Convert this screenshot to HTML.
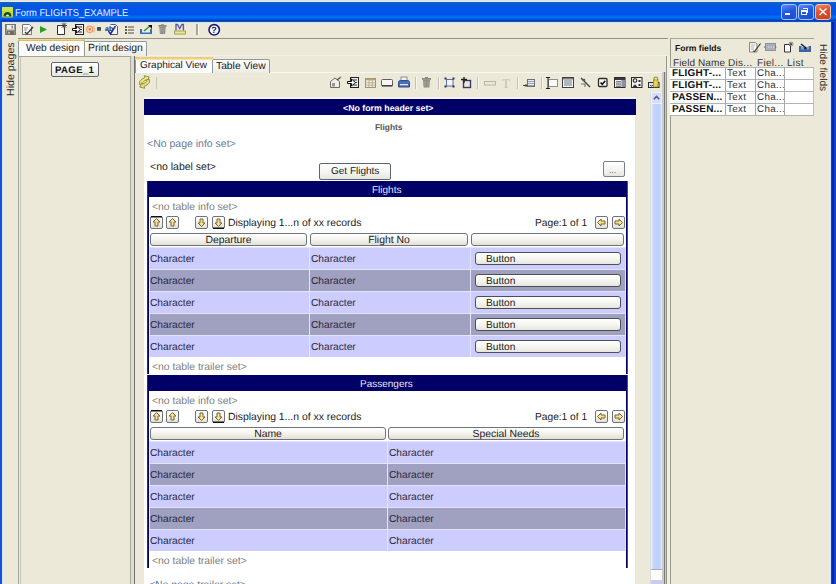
<!DOCTYPE html>
<html><head><meta charset="utf-8">
<style>
*{margin:0;padding:0;box-sizing:border-box}
html,body{width:836px;height:584px;overflow:hidden;background:#ECE9D8;font-family:"Liberation Sans",sans-serif;position:relative;text-rendering:geometricPrecision}
.a{position:absolute}
.t{position:absolute;white-space:nowrap;line-height:1}
.btn{position:absolute;border:1px solid #5C6670;border-radius:2px;background:linear-gradient(#FFFFFF,#F3F3EE 60%,#E6E5DC)}
.hb{position:absolute;border:1px solid #6C747C;border-radius:2px;background:linear-gradient(#FFFFFF,#F4F3EE 50%,#E2E0D4)}
svg{position:absolute;left:0;top:0}
</style></head><body>

<div class="a" style="left:0px;top:0px;width:836px;height:1px;background:#DCE6DA"></div>
<div class="a" style="left:0px;top:1px;width:836px;height:1px;background:#E2EEF6"></div>
<div class="a" style="left:0px;top:2px;width:836px;height:20px;background:linear-gradient(#1E5CC8 0px,#0A5AD8 2px,#0058DC 4px,#0054EA 6px,#0052EE 13px,#006EF4 14px,#006CF2 16px,#0056E2 17px,#0048D0 18px,#0038A8 19px,#3060B8 20px)"></div>
<div class="t" style="left:15px;top:9px;font-size:10px;color:#E4F0FF;transform:scaleX(0.935);transform-origin:0 0">Form FLIGHTS_EXAMPLE</div>
<div class="a" style="left:781px;top:4px;width:16px;height:16px;border:1px solid #A8C4F8;border-radius:3px;background:linear-gradient(160deg,#5A8CF4,#2458E0 45%,#1A4CD4)"></div>
<div class="a" style="left:798px;top:4px;width:16px;height:16px;border:1px solid #A8C4F8;border-radius:3px;background:linear-gradient(160deg,#5A8CF4,#2458E0 45%,#1A4CD4)"></div>
<div class="a" style="left:815px;top:4px;width:16px;height:16px;border:1px solid #F0C0B0;border-radius:3px;background:linear-gradient(160deg,#F08860,#D8502C 50%,#C84020)"></div>
<div class="a" style="left:785px;top:13px;width:5px;height:2px;background:#F4F8FF"></div>
<div class="a" style="left:801px;top:10px;width:6px;height:5px;border:1px solid #F4F8FF;border-top-width:2px"></div>
<div class="a" style="left:803px;top:8px;width:5px;height:5px;border:1px solid #F4F8FF;border-top-width:1px;border-left:none;border-bottom:none"></div>
<div class="a" style="left:0px;top:22px;width:2px;height:562px;background:#1C50D0"></div>
<div class="a" style="left:2px;top:22px;width:1px;height:562px;background:#D0E6F2"></div>
<div class="a" style="left:830px;top:22px;width:1px;height:562px;background:#D8E8FC"></div>
<div class="a" style="left:831px;top:22px;width:1px;height:562px;background:#2040A0"></div>
<div class="a" style="left:832px;top:22px;width:2px;height:562px;background:#0028B0"></div>
<div class="a" style="left:834px;top:22px;width:2px;height:562px;background:#1040D0"></div>
<div class="a" style="left:2px;top:22px;width:829px;height:1px;background:#D4E4F2"></div>
<div class="a" style="left:2px;top:23px;width:829px;height:1px;background:#E6ECE0"></div>
<div class="a" style="left:18px;top:38px;width:650px;height:1px;background:#949284"></div>
<div class="t" style="left:6px;top:95.5px;font-size:10.6px;color:#2A2A2A;transform:rotate(-90deg);transform-origin:0 0">Hide pages</div>
<div class="t" style="left:827px;top:44px;font-size:10.1px;color:#2A2A2A;transform:rotate(90deg);transform-origin:0 0">Hide fields</div>
<div class="a" style="left:18px;top:56px;width:113px;height:528px;border:1px solid #A4A496;border-bottom:none;border-right-color:#A8A89C;background:#ECE9D8"></div>
<div class="a" style="left:19px;top:57px;width:1px;height:527px;background:#E8E8DC"></div>
<div class="a" style="left:20px;top:57px;width:1px;height:527px;background:#C4C4B8"></div>
<div class="a" style="left:131px;top:56px;width:3px;height:528px;background:#DCDCD0"></div>
<div class="a" style="left:134px;top:55px;width:1px;height:529px;background:#747068"></div>
<div class="a" style="left:134px;top:55px;width:533px;height:1px;background:#F4F2E8"></div>
<div class="a" style="left:666px;top:56px;width:1px;height:528px;background:#98988A"></div>
<div class="a" style="left:84px;top:41px;width:63px;height:15px;border:1px solid #919B9C;border-bottom:none;border-radius:2px 2px 0 0;background:linear-gradient(#FFFFFF,#F3F2EC 60%,#ECEBE4)"></div>
<div class="t" style="left:88px;top:44px;font-size:10.4px;color:#222;">Print design</div>
<div class="a" style="left:18px;top:39px;width:67px;height:17px;border:1px solid #919B9C;border-bottom:none;border-radius:2px 2px 0 0;background:#FCFCFE"></div>
<div class="a" style="left:18px;top:39px;width:67px;height:2px;background:linear-gradient(#F0D890 0,#F0D890 1px,#E4BC58 1px);border-radius:2px 2px 0 0"></div>
<div class="t" style="left:26px;top:44px;font-size:10.2px;color:#222;">Web design</div>
<div class="btn" style="left:51px;top:62px;width:48px;height:15px"></div>
<div class="t" style="left:55px;top:66px;font-size:9.6px;color:#111;font-weight:bold;letter-spacing:0.35px">PAGE_1</div>
<div class="a" style="left:135px;top:72px;width:530px;height:512px;border-top:1px solid #F8F8F0;background:#ECE9D8"></div>
<div class="a" style="left:662px;top:72px;width:2px;height:512px;background:#C8CCD0"></div>
<div class="a" style="left:664px;top:72px;width:1px;height:512px;background:#7C7C74"></div>
<div class="a" style="left:665px;top:72px;width:1px;height:512px;background:#CACABC"></div>
<div class="a" style="left:212px;top:59px;width:58px;height:14px;border:1px solid #919B9C;border-bottom:none;border-radius:2px 2px 0 0;background:linear-gradient(#FFFFFF,#F3F2EC 60%,#ECEBE4)"></div>
<div class="t" style="left:216px;top:62px;font-size:10.3px;color:#222;">Table View</div>
<div class="a" style="left:135px;top:57px;width:78px;height:16px;border:1px solid #919B9C;border-bottom:none;border-radius:2px 2px 0 0;background:#FCFCFE"></div>
<div class="a" style="left:135px;top:57px;width:78px;height:3px;background:linear-gradient(#ECC890 0,#ECC890 1px,#F0CC68 1px,#F4D878 2px,#F8F0D0 3px);border-radius:2px 2px 0 0"></div>
<div class="t" style="left:140px;top:61px;font-size:10px;color:#222;">Graphical View</div>
<div class="a" style="left:156px;top:77px;width:1px;height:12px;background:#C8C6B8"></div>
<div class="a" style="left:144px;top:97px;width:491px;height:487px;background:#FFFFFF"></div>
<div class="a" style="left:144px;top:99px;width:492px;height:16px;background:#000066"></div>
<div class="a" style="left:144px;top:97px;width:491px;height:2px;background:#F4F4F6"></div>
<div class="t" style="left:343px;top:103.5px;font-size:8.8px;color:#FFFFFF;font-weight:bold;">&lt;No form header set&gt;</div>
<div class="t" style="left:375px;top:123px;font-size:8.4px;color:#555;font-weight:bold;">Flights</div>
<div class="t" style="left:147px;top:139px;font-size:10.5px;color:#6A7C94;">&lt;No page info set&gt;</div>
<div class="t" style="left:150px;top:162px;font-size:10.5px;color:#222;">&lt;no label set&gt;</div>
<div class="btn" style="left:319px;top:163px;width:72px;height:17px"></div>
<div class="t" style="left:331px;top:167px;font-size:10px;color:#222;">Get Flights</div>
<div class="btn" style="left:603px;top:161px;width:22px;height:16px;border-color:#7A8088"></div>
<div class="t" style="left:609px;top:166px;font-size:8.5px;color:#555;">...</div>
<div class="a" style="left:650px;top:92px;width:1px;height:492px;background:#D8DEE0"></div>
<div class="a" style="left:651px;top:92px;width:11px;height:492px;background:#FCFCF8"></div>
<div class="a" style="left:651px;top:92px;width:11px;height:12px;background:#D8DCF8;border:1px solid #EEF0FC"></div>
<div class="a" style="left:651px;top:104px;width:11px;height:465px;background:linear-gradient(90deg,#E4ECFC 0,#E4ECFC 1px,#C6D6FA 2px,#BED2FC 50%,#C0D2F8 85%,#E0EAFC 92%)"></div>
<div class="a" style="left:651px;top:569px;width:11px;height:1px;background:#A8A8C0"></div>
<div class="a" style="left:651px;top:580px;width:11px;height:4px;background:#C8CCF4"></div>
<div class="a" style="left:670px;top:38px;width:144px;height:546px;border-left:1px solid #9A9A88;border-top:1px solid #A8A69A;background:#ECE9D8"></div>
<div class="a" style="left:667px;top:56px;width:3px;height:528px;background:#F0EEE0"></div>
<div class="t" style="left:675px;top:44px;font-size:8.6px;color:#111;font-weight:bold;">Form fields</div>
<div class="t" style="left:673px;top:59px;font-size:10px;color:#333;letter-spacing:0.1px">Field Name</div>
<div class="t" style="left:728px;top:59px;font-size:10px;color:#333;letter-spacing:0.3px">Dis...</div>
<div class="t" style="left:757px;top:59px;font-size:10px;color:#333;letter-spacing:0.3px">Fiel...</div>
<div class="t" style="left:787px;top:59px;font-size:10px;color:#333;letter-spacing:0.3px">List</div>
<div class="a" style="left:670px;top:68px;width:144px;height:48px;background:#FFFFFF;border-right:1px solid #C0C0C0;border-bottom:1px solid #A0A0A0"></div>
<div class="a" style="left:670px;top:79px;width:144px;height:1px;background:#B4B4B4"></div>
<div class="t" style="left:672px;top:69px;font-size:10px;color:#111;font-weight:bold;letter-spacing:0.2px">FLIGHT-...</div>
<div class="t" style="left:727px;top:69px;font-size:9.8px;color:#333;letter-spacing:0.35px">Text</div>
<div class="t" style="left:757px;top:69px;font-size:9.8px;color:#333;letter-spacing:0.35px">Cha...</div>
<div class="a" style="left:670px;top:91px;width:144px;height:1px;background:#B4B4B4"></div>
<div class="t" style="left:672px;top:81px;font-size:10px;color:#111;font-weight:bold;letter-spacing:0.2px">FLIGHT-...</div>
<div class="t" style="left:727px;top:81px;font-size:9.8px;color:#333;letter-spacing:0.35px">Text</div>
<div class="t" style="left:757px;top:81px;font-size:9.8px;color:#333;letter-spacing:0.35px">Cha...</div>
<div class="a" style="left:670px;top:103px;width:144px;height:1px;background:#B4B4B4"></div>
<div class="t" style="left:672px;top:93px;font-size:10px;color:#111;font-weight:bold;letter-spacing:0.2px">PASSEN...</div>
<div class="t" style="left:727px;top:93px;font-size:9.8px;color:#333;letter-spacing:0.35px">Text</div>
<div class="t" style="left:757px;top:93px;font-size:9.8px;color:#333;letter-spacing:0.35px">Cha...</div>
<div class="a" style="left:670px;top:115px;width:144px;height:1px;background:#B4B4B4"></div>
<div class="t" style="left:672px;top:105px;font-size:10px;color:#111;font-weight:bold;letter-spacing:0.2px">PASSEN...</div>
<div class="t" style="left:727px;top:105px;font-size:9.8px;color:#333;letter-spacing:0.35px">Text</div>
<div class="t" style="left:757px;top:105px;font-size:9.8px;color:#333;letter-spacing:0.35px">Cha...</div>
<div class="a" style="left:725px;top:68px;width:1px;height:47px;background:#A8A8A8"></div>
<div class="a" style="left:755px;top:68px;width:1px;height:47px;background:#A8A8A8"></div>
<div class="a" style="left:784px;top:68px;width:1px;height:47px;background:#A8A8A8"></div>
<div class="a" style="left:670px;top:67px;width:144px;height:1px;background:#B4B4B4"></div>
<div class="a" style="left:147px;top:181px;width:480px;height:16px;background:#000066"></div>
<div class="t" style="left:372px;top:186px;font-size:10px;color:#E8E8FA;">Flights</div>
<div class="a" style="left:147px;top:181px;width:1px;height:193px;background:#2A2A80"></div>
<div class="a" style="left:148px;top:181px;width:1px;height:193px;background:#000066"></div>
<div class="a" style="left:626px;top:181px;width:1px;height:193px;background:#000066"></div>
<div class="a" style="left:627px;top:181px;width:1px;height:193px;background:#4A4A90"></div>
<div class="t" style="left:152px;top:203px;font-size:10.4px;color:#7E7E7E;">&lt;no table info set&gt;</div>
<div class="hb" style="left:150px;top:216px;width:13px;height:13px"></div>
<div class="hb" style="left:166px;top:216px;width:13px;height:13px"></div>
<div class="hb" style="left:195px;top:216px;width:13px;height:13px"></div>
<div class="hb" style="left:212px;top:216px;width:13px;height:13px"></div>
<div class="t" style="left:228px;top:219px;font-size:10.4px;color:#222;">Displaying 1...n of xx records</div>
<div class="t" style="left:535px;top:219px;font-size:10.2px;color:#222;">Page:1 of 1</div>
<div class="hb" style="left:595px;top:216px;width:13px;height:13px"></div>
<div class="hb" style="left:612px;top:216px;width:13px;height:13px"></div>
<div class="hb" style="left:150px;top:233px;width:157px;height:13px;border-radius:3px"></div>
<div class="t" style="left:150px;top:236px;width:157px;text-align:center;font-size:10.4px;color:#222">Departure</div>
<div class="hb" style="left:310px;top:233px;width:158px;height:13px;border-radius:3px"></div>
<div class="t" style="left:310px;top:236px;width:158px;text-align:center;font-size:10.4px;color:#222">Flight No</div>
<div class="hb" style="left:471px;top:233px;width:153px;height:13px;border-radius:3px"></div>
<div class="a" style="left:149px;top:247px;width:477px;height:22px;background:#CCCCFF"></div>
<div class="a" style="left:149px;top:247px;width:477px;height:1px;background:#E4E4FF"></div>
<div class="a" style="left:149px;top:247px;width:1px;height:22px;background:#E4E4FF"></div>
<div class="a" style="left:625px;top:247px;width:1px;height:22px;background:#E4E4FF"></div>
<div class="a" style="left:309px;top:247px;width:1px;height:22px;background:#E4E4FF"></div>
<div class="a" style="left:470px;top:247px;width:1px;height:22px;background:#E4E4FF"></div>
<div class="t" style="left:150px;top:255px;font-size:10.2px;color:#2A2A44;">Character</div>
<div class="t" style="left:311px;top:255px;font-size:10.2px;color:#2A2A44;">Character</div>
<div class="btn" style="left:475px;top:252px;width:146px;height:13px;border-radius:3px;border-color:#4A5058"></div>
<div class="t" style="left:486px;top:255px;font-size:10.2px;color:#222;">Button</div>
<div class="a" style="left:149px;top:269px;width:477px;height:22px;background:#A0A0C0"></div>
<div class="a" style="left:149px;top:269px;width:477px;height:1px;background:#E4E4FF"></div>
<div class="a" style="left:149px;top:269px;width:1px;height:22px;background:#E4E4FF"></div>
<div class="a" style="left:625px;top:269px;width:1px;height:22px;background:#E4E4FF"></div>
<div class="a" style="left:309px;top:269px;width:1px;height:22px;background:#E4E4FF"></div>
<div class="a" style="left:470px;top:269px;width:1px;height:22px;background:#E4E4FF"></div>
<div class="t" style="left:150px;top:277px;font-size:10.2px;color:#2A2A44;">Character</div>
<div class="t" style="left:311px;top:277px;font-size:10.2px;color:#2A2A44;">Character</div>
<div class="btn" style="left:475px;top:274px;width:146px;height:13px;border-radius:3px;border-color:#4A5058"></div>
<div class="t" style="left:486px;top:277px;font-size:10.2px;color:#222;">Button</div>
<div class="a" style="left:149px;top:291px;width:477px;height:22px;background:#CCCCFF"></div>
<div class="a" style="left:149px;top:291px;width:477px;height:1px;background:#E4E4FF"></div>
<div class="a" style="left:149px;top:291px;width:1px;height:22px;background:#E4E4FF"></div>
<div class="a" style="left:625px;top:291px;width:1px;height:22px;background:#E4E4FF"></div>
<div class="a" style="left:309px;top:291px;width:1px;height:22px;background:#E4E4FF"></div>
<div class="a" style="left:470px;top:291px;width:1px;height:22px;background:#E4E4FF"></div>
<div class="t" style="left:150px;top:299px;font-size:10.2px;color:#2A2A44;">Character</div>
<div class="t" style="left:311px;top:299px;font-size:10.2px;color:#2A2A44;">Character</div>
<div class="btn" style="left:475px;top:296px;width:146px;height:13px;border-radius:3px;border-color:#4A5058"></div>
<div class="t" style="left:486px;top:299px;font-size:10.2px;color:#222;">Button</div>
<div class="a" style="left:149px;top:313px;width:477px;height:22px;background:#A0A0C0"></div>
<div class="a" style="left:149px;top:313px;width:477px;height:1px;background:#E4E4FF"></div>
<div class="a" style="left:149px;top:313px;width:1px;height:22px;background:#E4E4FF"></div>
<div class="a" style="left:625px;top:313px;width:1px;height:22px;background:#E4E4FF"></div>
<div class="a" style="left:309px;top:313px;width:1px;height:22px;background:#E4E4FF"></div>
<div class="a" style="left:470px;top:313px;width:1px;height:22px;background:#E4E4FF"></div>
<div class="t" style="left:150px;top:321px;font-size:10.2px;color:#2A2A44;">Character</div>
<div class="t" style="left:311px;top:321px;font-size:10.2px;color:#2A2A44;">Character</div>
<div class="btn" style="left:475px;top:318px;width:146px;height:13px;border-radius:3px;border-color:#4A5058"></div>
<div class="t" style="left:486px;top:321px;font-size:10.2px;color:#222;">Button</div>
<div class="a" style="left:149px;top:335px;width:477px;height:22px;background:#CCCCFF"></div>
<div class="a" style="left:149px;top:335px;width:477px;height:1px;background:#E4E4FF"></div>
<div class="a" style="left:149px;top:335px;width:1px;height:22px;background:#E4E4FF"></div>
<div class="a" style="left:625px;top:335px;width:1px;height:22px;background:#E4E4FF"></div>
<div class="a" style="left:309px;top:335px;width:1px;height:22px;background:#E4E4FF"></div>
<div class="a" style="left:470px;top:335px;width:1px;height:22px;background:#E4E4FF"></div>
<div class="t" style="left:150px;top:343px;font-size:10.2px;color:#2A2A44;">Character</div>
<div class="t" style="left:311px;top:343px;font-size:10.2px;color:#2A2A44;">Character</div>
<div class="btn" style="left:475px;top:340px;width:146px;height:13px;border-radius:3px;border-color:#4A5058"></div>
<div class="t" style="left:486px;top:343px;font-size:10.2px;color:#222;">Button</div>
<div class="t" style="left:152px;top:363px;font-size:10.4px;color:#7E7E7E;">&lt;no table trailer set&gt;</div>
<div class="a" style="left:147px;top:375px;width:480px;height:16px;background:#000066"></div>
<div class="t" style="left:360px;top:380px;font-size:10px;color:#E8E8FA;">Passengers</div>
<div class="a" style="left:147px;top:375px;width:1px;height:193px;background:#2A2A80"></div>
<div class="a" style="left:148px;top:375px;width:1px;height:193px;background:#000066"></div>
<div class="a" style="left:626px;top:375px;width:1px;height:193px;background:#000066"></div>
<div class="a" style="left:627px;top:375px;width:1px;height:193px;background:#4A4A90"></div>
<div class="t" style="left:152px;top:397px;font-size:10.4px;color:#7E7E7E;">&lt;no table info set&gt;</div>
<div class="hb" style="left:150px;top:410px;width:13px;height:13px"></div>
<div class="hb" style="left:166px;top:410px;width:13px;height:13px"></div>
<div class="hb" style="left:195px;top:410px;width:13px;height:13px"></div>
<div class="hb" style="left:212px;top:410px;width:13px;height:13px"></div>
<div class="t" style="left:228px;top:413px;font-size:10.4px;color:#222;">Displaying 1...n of xx records</div>
<div class="t" style="left:535px;top:413px;font-size:10.2px;color:#222;">Page:1 of 1</div>
<div class="hb" style="left:595px;top:410px;width:13px;height:13px"></div>
<div class="hb" style="left:612px;top:410px;width:13px;height:13px"></div>
<div class="hb" style="left:150px;top:427px;width:236px;height:13px;border-radius:3px"></div>
<div class="t" style="left:150px;top:430px;width:236px;text-align:center;font-size:10.4px;color:#222">Name</div>
<div class="hb" style="left:388px;top:427px;width:236px;height:13px;border-radius:3px"></div>
<div class="t" style="left:388px;top:430px;width:236px;text-align:center;font-size:10.4px;color:#222">Special Needs</div>
<div class="a" style="left:149px;top:441px;width:477px;height:22px;background:#CCCCFF"></div>
<div class="a" style="left:149px;top:441px;width:477px;height:1px;background:#E4E4FF"></div>
<div class="a" style="left:149px;top:441px;width:1px;height:22px;background:#E4E4FF"></div>
<div class="a" style="left:625px;top:441px;width:1px;height:22px;background:#E4E4FF"></div>
<div class="a" style="left:387px;top:441px;width:1px;height:22px;background:#E4E4FF"></div>
<div class="t" style="left:150px;top:449px;font-size:10.2px;color:#2A2A44;">Character</div>
<div class="t" style="left:389px;top:449px;font-size:10.2px;color:#2A2A44;">Character</div>
<div class="a" style="left:149px;top:463px;width:477px;height:22px;background:#A0A0C0"></div>
<div class="a" style="left:149px;top:463px;width:477px;height:1px;background:#E4E4FF"></div>
<div class="a" style="left:149px;top:463px;width:1px;height:22px;background:#E4E4FF"></div>
<div class="a" style="left:625px;top:463px;width:1px;height:22px;background:#E4E4FF"></div>
<div class="a" style="left:387px;top:463px;width:1px;height:22px;background:#E4E4FF"></div>
<div class="t" style="left:150px;top:471px;font-size:10.2px;color:#2A2A44;">Character</div>
<div class="t" style="left:389px;top:471px;font-size:10.2px;color:#2A2A44;">Character</div>
<div class="a" style="left:149px;top:485px;width:477px;height:22px;background:#CCCCFF"></div>
<div class="a" style="left:149px;top:485px;width:477px;height:1px;background:#E4E4FF"></div>
<div class="a" style="left:149px;top:485px;width:1px;height:22px;background:#E4E4FF"></div>
<div class="a" style="left:625px;top:485px;width:1px;height:22px;background:#E4E4FF"></div>
<div class="a" style="left:387px;top:485px;width:1px;height:22px;background:#E4E4FF"></div>
<div class="t" style="left:150px;top:493px;font-size:10.2px;color:#2A2A44;">Character</div>
<div class="t" style="left:389px;top:493px;font-size:10.2px;color:#2A2A44;">Character</div>
<div class="a" style="left:149px;top:507px;width:477px;height:22px;background:#A0A0C0"></div>
<div class="a" style="left:149px;top:507px;width:477px;height:1px;background:#E4E4FF"></div>
<div class="a" style="left:149px;top:507px;width:1px;height:22px;background:#E4E4FF"></div>
<div class="a" style="left:625px;top:507px;width:1px;height:22px;background:#E4E4FF"></div>
<div class="a" style="left:387px;top:507px;width:1px;height:22px;background:#E4E4FF"></div>
<div class="t" style="left:150px;top:515px;font-size:10.2px;color:#2A2A44;">Character</div>
<div class="t" style="left:389px;top:515px;font-size:10.2px;color:#2A2A44;">Character</div>
<div class="a" style="left:149px;top:529px;width:477px;height:22px;background:#CCCCFF"></div>
<div class="a" style="left:149px;top:529px;width:477px;height:1px;background:#E4E4FF"></div>
<div class="a" style="left:149px;top:529px;width:1px;height:22px;background:#E4E4FF"></div>
<div class="a" style="left:625px;top:529px;width:1px;height:22px;background:#E4E4FF"></div>
<div class="a" style="left:387px;top:529px;width:1px;height:22px;background:#E4E4FF"></div>
<div class="t" style="left:150px;top:537px;font-size:10.2px;color:#2A2A44;">Character</div>
<div class="t" style="left:389px;top:537px;font-size:10.2px;color:#2A2A44;">Character</div>
<div class="t" style="left:152px;top:557px;font-size:10.4px;color:#7E7E7E;">&lt;no table trailer set&gt;</div>
<div class="t" style="left:149px;top:581px;font-size:10.4px;color:#6A7C94;">&lt;No page trailer set&gt;</div>
<svg width="836" height="584" viewBox="0 0 836 584"><rect x="5.5" y="24.5" width="10" height="10" fill="#9C968E" stroke="#7A746C"/><rect x="7" y="25" width="7" height="4.5" fill="#F0F0EC"/><rect x="11.5" y="25.5" width="1.5" height="3" fill="#7A8498"/><rect x="7" y="31" width="7" height="3.5" fill="#6E6862"/><rect x="8" y="31.8" width="2" height="2" fill="#B8B2AA"/><path d="M22.5 24.5h7l2 2v8h-9z" fill="#FAFAF8" stroke="#7C7670"/><path d="M24 28h4M24 30h3" stroke="#8890A0"/><path d="M25 32l2 2l6-7" stroke="#3A3A3A" stroke-width="1.4" fill="none"/><path d="M40 26l7 3.5l-7 3.5z" fill="#28A028"/><path d="M57.5 25.5h5l2 2v7h-7z" fill="#FFFFFF" stroke="#303030"/><path d="M64 22.5v6M61 25.5h6M61.8 23.3l4.4 4.4M66.2 23.3l-4.4 4.4" stroke="#3A3630" stroke-width="0.9"/><rect x="75.5" y="24.5" width="8" height="10" fill="#F0F0F0" stroke="#202020"/><path d="M78 27h4M78 29.5h4M78 32h4" stroke="#303030" stroke-width="1.2"/><path d="M72.5 28.5h4v-2.5l4 3.5l-4 3.5v-2.5h-4z" fill="#FFFFFF" stroke="#101010"/><circle cx="89.8" cy="29.3" r="3.2" fill="#F8D8B8" stroke="#F0A070" stroke-width="1.3"/><circle cx="89.8" cy="29.3" r="1.3" fill="#E88040"/><path d="M93.5 26.2q2.2 3.1 0 6.2" fill="none" stroke="#E8B898" stroke-width="1.1"/><rect x="97" y="27" width="4" height="3.8" fill="#3C5454"/><path d="M110.5 24.5h5l2 2v8h-7" fill="#F8F8FC" stroke="#505870"/><text x="105" y="31" font-family="Liberation Sans" font-weight="bold" font-size="7" fill="#1A2A60">ab</text><path d="M108.5 31l2 3l5-8" stroke="#2030A0" stroke-width="1.5" fill="none"/><rect x="125" y="26" width="2" height="2" fill="#605C58"/><rect x="128" y="26.3" width="6" height="1.4" fill="#7C7874"/><rect x="125" y="29" width="2" height="2" fill="#605C58"/><rect x="128" y="29.3" width="6" height="1.4" fill="#7C7874"/><rect x="125" y="32" width="2" height="2" fill="#605C58"/><rect x="128" y="32.3" width="6" height="1.4" fill="#7C7874"/><path d="M140 29v5h12v-5h-2v3h-8v-3z" fill="#3C6CB0"/><rect x="142" y="32" width="8" height="1" fill="#8AB0E0"/><path d="M144 31l6-5" stroke="#2A8A3A" stroke-width="1.3"/><path d="M148 25h4v4z" fill="#101010"/><rect x="158.5" y="25" width="8" height="1.8" fill="#888680"/><rect x="161" y="24.3" width="3" height="1" fill="#888680"/><path d="M159.3 27h6.4l-.6 7h-5.2z" fill="#8E8C86"/><path d="M161 28v5M163.2 28v5" stroke="#B8B6B0" stroke-width=".7"/><path d="M176 30.5v-6h1.5l2.2 4l2.2-4h1.5v6" fill="none" stroke="#5A5AAC" stroke-width="1.4"/><rect x="174.5" y="31" width="11" height="3" fill="#EEE890" stroke="#A8A050"/><rect x="196" y="24" width="2" height="11" fill="#A8A49A"/><rect x="198" y="24" width="1" height="11" fill="#FFFFFF" opacity=".7"/><circle cx="214.2" cy="29.8" r="5.2" fill="#FFFFFF" stroke="#1A1A7A" stroke-width="1.6"/><text x="211.2" y="33.3" font-family="Liberation Sans" font-weight="bold" font-size="9" fill="#1A1A7A">?</text><path d="M139.5 84.5q-1-3.5 2.5-5.5l3-1.5l-0.8-1.8l5 1.2l-2 4.6l-0.8-1.6l-2.6 1.3q-2.2 1.2-1.3 3.3z" fill="#ECE890" stroke="#8C8A38" stroke-width=".9"/><path d="M149.5 79.5q1 3.5-2.5 5.5l-3 1.5l0.8 1.8l-5-1.2l2-4.6l0.8 1.6l2.6-1.3q2.2-1.2 1.3-3.3z" fill="#E4E078" stroke="#8C8A38" stroke-width=".9"/><path d="M330.5 81.5l4.5-3.5l4.5 3.5v6h-9z" fill="#F0EEE8" stroke="#6E6A66"/><rect x="332" y="83" width="3" height="3.5" fill="#9A968E"/><path d="M337 80l4-3" stroke="#4A4A44" stroke-width="1.2"/><path d="M339.5 76.5l2 0l-0.5 1.5z" fill="#E0C840"/><rect x="350.5" y="77.5" width="8" height="10" fill="#F0F0F0" stroke="#202020"/><path d="M353 80h4M353 82.5h4M353 85h4" stroke="#303030" stroke-width="1.2"/><path d="M347.5 81.5h4v-2.5l4 3.5l-4 3.5v-2.5h-4z" fill="#FFFFFF" stroke="#101010"/><rect x="365.5" y="78.5" width="10" height="9" fill="#F4F0E4" stroke="#A09070"/><rect x="365.5" y="78.5" width="10" height="1.8" fill="#B0A080"/><path d="M365.5 82.8h10M365.5 85.2h10M369 78.5v9M372.3 78.5v9" stroke="#B0A080" stroke-width=".8"/><rect x="381.5" y="79.5" width="11" height="6.5" rx="1" fill="#F6F6F4" stroke="#606060"/><rect x="382" y="85" width="10.5" height="1.3" fill="#404040"/><rect x="401" y="77" width="6" height="4" fill="#F0F0F0" stroke="#7A7A7A" stroke-width=".8"/><path d="M398.5 82.5q0-2 2-2h7q2 0 2 2v4.5h-11z" fill="#4A6EB8" stroke="#2A4C8C"/><rect x="400" y="84" width="8" height="1.3" fill="#E0E8F8"/><rect x="415" y="77" width="1" height="12" fill="#C4C2B4"/><rect x="416" y="77" width="1" height="12" fill="#FFFFFF" opacity=".6"/><rect x="422" y="78" width="9" height="1.8" fill="#8A8884"/><rect x="425" y="77" width="3" height="1" fill="#8A8884"/><path d="M423 80h7l-.6 7.5h-5.8z" fill="#8E8C88"/><path d="M425 81v5.5M428 81v5.5" stroke="#B8B6B2" stroke-width=".7"/><rect x="438" y="77" width="1" height="12" fill="#C4C2B4"/><rect x="439" y="77" width="1" height="12" fill="#FFFFFF" opacity=".6"/><rect x="446.5" y="79.5" width="6.5" height="6.5" fill="#F4F4FA" stroke="#5A70B0" stroke-width="1"/><rect x="444.5" y="77.5" width="2" height="2" fill="#303040"/><rect x="452.5" y="77.5" width="2" height="2" fill="#303040"/><rect x="444.5" y="85.5" width="2" height="2" fill="#303040"/><rect x="452.5" y="85.5" width="2" height="2" fill="#303040"/><rect x="463.5" y="80.5" width="7" height="7" fill="none" stroke="#3A3A6A" stroke-width="1.4"/><path d="M461 79.5h6M464 77v6" stroke="#202020" stroke-width="1.3"/><rect x="477" y="77" width="1" height="12" fill="#C4C2B4"/><rect x="478" y="77" width="1" height="12" fill="#FFFFFF" opacity=".6"/><rect x="484.5" y="81.5" width="11" height="3.5" fill="none" stroke="#B8B6AC"/><text x="502" y="88" font-family="Liberation Serif" font-size="13" fill="#BEBCB2">T</text><rect x="517" y="77" width="1" height="12" fill="#C4C2B4"/><rect x="518" y="77" width="1" height="12" fill="#FFFFFF" opacity=".6"/><rect x="527.5" y="79.5" width="7" height="7" fill="#E8ECF4" stroke="#6A7080"/><path d="M528 81.5h6M528 83.5h6M528 85.5h6" stroke="#7A8090" stroke-width=".7"/><path d="M523 85.5h4l-1.5-1.5M527 85.5l-1.5 1.5" stroke="#404040" stroke-width="1" fill="none"/><rect x="541" y="77" width="1" height="12" fill="#C4C2B4"/><rect x="542" y="77" width="1" height="12" fill="#FFFFFF" opacity=".6"/><rect x="548.5" y="79.5" width="9" height="7" fill="#FAFAF8" stroke="#909090"/><path d="M546 77.5h4M548 77.5v11M546 88.5h4" stroke="#202020" stroke-width="1"/><rect x="562.5" y="77.5" width="11" height="10" fill="#F4F4F4" stroke="#404040"/><rect x="563" y="78" width="10" height="1.5" fill="#7A7A7A"/><path d="M564 81h8M564 83h8M564 85h8" stroke="#505A70" stroke-width=".8"/><path d="M581 78l9 9" stroke="#404848" stroke-width="1.4"/><path d="M581 84h4v3" stroke="#707870" stroke-width="1.2" fill="none"/><circle cx="584" cy="80" r="1.3" fill="#506060"/><rect x="598.5" y="78.5" width="8.5" height="8" rx="1" fill="#FAFAFA" stroke="#2A2A2A" stroke-width="1.3"/><path d="M600.5 82.5l1.8 1.8l3-3.5" stroke="#101010" stroke-width="1.6" fill="none"/><rect x="614.5" y="77.5" width="10.5" height="10" fill="#EEEEEE" stroke="#2A2A2A"/><rect x="615" y="78" width="10" height="2" fill="#3A3A3A"/><rect x="621.5" y="80" width="3" height="7" fill="#8890A8"/><path d="M616 81.8h5M616 84h5M616 86.2h5" stroke="#404040" stroke-width=".9"/><rect x="631.5" y="77.5" width="10.5" height="10" fill="#F0F0F0" stroke="#2A2A2A"/><circle cx="635" cy="80.5" r="1.8" fill="none" stroke="#202020" stroke-width="1.1"/><path d="M632.5 87l2.5-2.8l2.5 2.8z" fill="#303030"/><rect x="638.5" y="80" width="2" height="2" fill="#303030"/><rect x="638.5" y="84" width="2" height="2" fill="#303030"/><rect x="648.5" y="82.5" width="10.5" height="5" fill="#E8E8F0" stroke="#2A2A2A"/><path d="M650 85l1.5 1.2l1.5-1.2" stroke="#303060" fill="none"/><path d="M654 80v-1.2a1.8 1.8 0 0 1 3.6 0v1.2" fill="none" stroke="#A09020" stroke-width="1.2"/><rect x="653.5" y="80" width="4.5" height="7" fill="#E8D850" stroke="#908018" stroke-width=".7"/><path d="M749.5 42.5h6l1.5 1.5v8h-7.5z" fill="#F4F4F0" stroke="#8A8680"/><path d="M751 45h4M751 47h3M751 49h3" stroke="#A0A8B0" stroke-width=".8"/><path d="M753 51l1.5 .5l6-8" stroke="#3A3A3A" stroke-width="1.2" fill="none"/><rect x="765.5" y="43.5" width="10" height="7" fill="#E8E8F0" stroke="#9090A0"/><path d="M766 45h9M766 49h9" stroke="#707088" stroke-width="1.2"/><path d="M764 47h13" stroke="#505070" stroke-width="1" stroke-dasharray="1 .6"/><path d="M784.5 44.5h4.5l1.5 1.5v6h-6z" fill="#FFFFFF" stroke="#303030"/><path d="M791 41.5v5M788.5 44h5M789.3 42.3l3.4 3.4M792.7 42.3l-3.4 3.4" stroke="#404040" stroke-width=".7"/><path d="M799 46v6h12v-6h-2.5v3.2h-7v-3.2z" fill="#3A64A8"/><rect x="801.5" y="47" width="7" height="2.2" fill="#7CA0D8"/><path d="M801 44l5 4" stroke="#101828" stroke-width="1.4"/><path d="M807 49.5l-3.5 -.3l2.3 -2.6z" fill="#101828"/><path d="M819.5 8.5l7 6.5M826.5 8.5l-7 6.5" stroke="#FFF4F0" stroke-width="1.5"/><rect x="2" y="7" width="11" height="10.5" rx="1.5" fill="#B8DC48"/><rect x="2" y="7" width="11" height="4" rx="1" fill="#D0E448"/><path d="M3.5 16.5a4 4.5 0 0 1 8 0z" fill="#1E4A14"/><path d="M5.8 16.3a1.7 1.8 0 0 1 3.4 0z" fill="#E8F0E8"/><path d="M653.8 99.2l2.7-2.7l2.7 2.7" fill="none" stroke="#4A5A90" stroke-width="1.6"/><path d="M156.5 218.5l-3.5 3.5h2v4h3v-4h2z" fill="#F4E296" stroke="#7A6434" stroke-width="1"/><rect x="151" y="216" width="11" height="1.5" fill="#101010"/><path d="M172.5 218.5l-3.5 3.5h2v4h3v-4h2z" fill="#F4E296" stroke="#7A6434" stroke-width="1"/><path d="M201.5 226.5l-3.5 -3.5h2v-4h3v4h2z" fill="#F4E296" stroke="#7A6434" stroke-width="1"/><path d="M218.5 226.5l-3.5 -3.5h2v-4h3v4h2z" fill="#F4E296" stroke="#7A6434" stroke-width="1"/><rect x="213" y="227.5" width="11" height="1.5" fill="#101010"/><path d="M597.5 222.5l3.5 -3.5v2h4v3h-4v2z" fill="#F4E296" stroke="#7A6434" stroke-width="1"/><path d="M622.5 222.5l-3.5 -3.5v2h-4v3h4v2z" fill="#F4E296" stroke="#7A6434" stroke-width="1"/><path d="M156.5 412.5l-3.5 3.5h2v4h3v-4h2z" fill="#F4E296" stroke="#7A6434" stroke-width="1"/><rect x="151" y="410" width="11" height="1.5" fill="#101010"/><path d="M172.5 412.5l-3.5 3.5h2v4h3v-4h2z" fill="#F4E296" stroke="#7A6434" stroke-width="1"/><path d="M201.5 420.5l-3.5 -3.5h2v-4h3v4h2z" fill="#F4E296" stroke="#7A6434" stroke-width="1"/><path d="M218.5 420.5l-3.5 -3.5h2v-4h3v4h2z" fill="#F4E296" stroke="#7A6434" stroke-width="1"/><rect x="213" y="421.5" width="11" height="1.5" fill="#101010"/><path d="M597.5 416.5l3.5 -3.5v2h4v3h-4v2z" fill="#F4E296" stroke="#7A6434" stroke-width="1"/><path d="M622.5 416.5l-3.5 -3.5v2h-4v3h4v2z" fill="#F4E296" stroke="#7A6434" stroke-width="1"/></svg>
</body></html>
